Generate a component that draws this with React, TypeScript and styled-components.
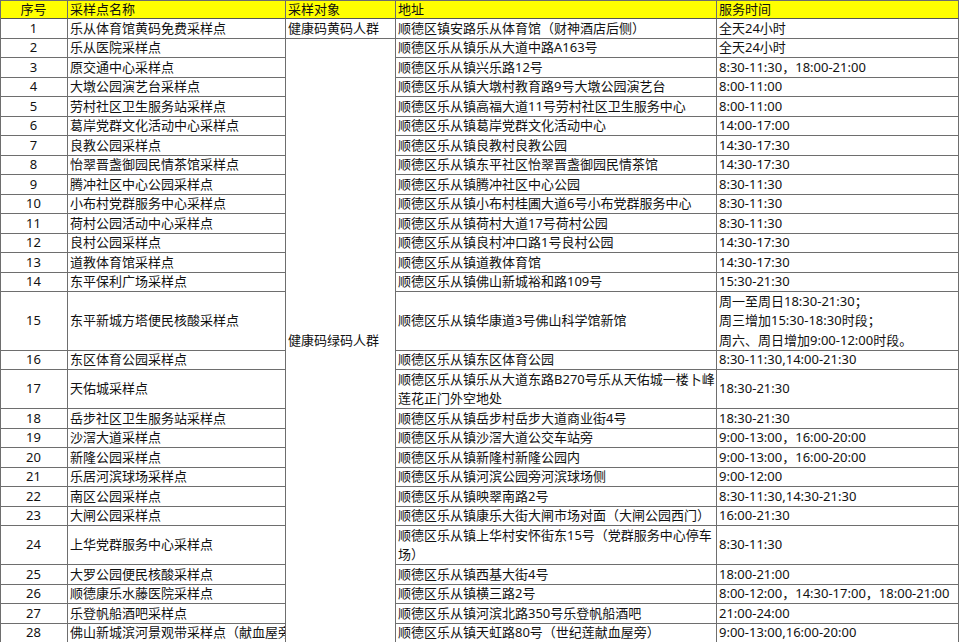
import React from "react";
import styled, { createGlobalStyle } from "styled-components";

const GlobalStyle = createGlobalStyle`
  html, body {
    margin: 0;
    padding: 0;
    background: #ffffff;
  }
  body {
    font-family: "Noto Sans", "Noto Sans CJK SC", sans-serif;
    color: #111111;
    overflow: hidden;
  }
`;

const LINE = 19.5;

type Site = {
  no: number;
  name: string;
  address: string[];
  time: string[];
};

const sites: Site[] = [
  { no: 1, name: "乐从体育馆黄码免费采样点", address: ["顺德区镇安路乐从体育馆（财神酒店后侧）"], time: ["全天24小时"] },
  { no: 2, name: "乐从医院采样点", address: ["顺德区乐从镇乐从大道中路A163号"], time: ["全天24小时"] },
  { no: 3, name: "原交通中心采样点", address: ["顺德区乐从镇兴乐路12号"], time: ["8:30-11:30，18:00-21:00"] },
  { no: 4, name: "大墩公园演艺台采样点", address: ["顺德区乐从镇大墩村教育路9号大墩公园演艺台"], time: ["8:00-11:00"] },
  { no: 5, name: "劳村社区卫生服务站采样点", address: ["顺德区乐从镇高福大道11号劳村社区卫生服务中心"], time: ["8:00-11:00"] },
  { no: 6, name: "葛岸党群文化活动中心采样点", address: ["顺德区乐从镇葛岸党群文化活动中心"], time: ["14:00-17:00"] },
  { no: 7, name: "良教公园采样点", address: ["顺德区乐从镇良教村良教公园"], time: ["14:30-17:30"] },
  { no: 8, name: "怡翠晋盏御园民情茶馆采样点", address: ["顺德区乐从镇东平社区怡翠晋盏御园民情茶馆"], time: ["14:30-17:30"] },
  { no: 9, name: "腾冲社区中心公园采样点", address: ["顺德区乐从镇腾冲社区中心公园"], time: ["8:30-11:30"] },
  { no: 10, name: "小布村党群服务中心采样点", address: ["顺德区乐从镇小布村桂圃大道6号小布党群服务中心"], time: ["8:30-11:30"] },
  { no: 11, name: "荷村公园活动中心采样点", address: ["顺德区乐从镇荷村大道17号荷村公园"], time: ["8:30-11:30"] },
  { no: 12, name: "良村公园采样点", address: ["顺德区乐从镇良村冲口路1号良村公园"], time: ["14:30-17:30"] },
  { no: 13, name: "道教体育馆采样点", address: ["顺德区乐从镇道教体育馆"], time: ["14:30-17:30"] },
  { no: 14, name: "东平保利广场采样点", address: ["顺德区乐从镇佛山新城裕和路109号"], time: ["15:30-21:30"] },
  {
    no: 15,
    name: "东平新城方塔便民核酸采样点",
    address: ["顺德区乐从镇华康道3号佛山科学馆新馆"],
    time: ["周一至周日18:30-21:30；", "周三增加15:30-18:30时段；", "周六、周日增加9:00-12:00时段。"],
  },
  { no: 16, name: "东区体育公园采样点", address: ["顺德区乐从镇东区体育公园"], time: ["8:30-11:30,14:00-21:30"] },
  {
    no: 17,
    name: "天佑城采样点",
    address: ["顺德区乐从镇乐从大道东路B270号乐从天佑城一楼卜峰", "莲花正门外空地处"],
    time: ["18:30-21:30"],
  },
  { no: 18, name: "岳步社区卫生服务站采样点", address: ["顺德区乐从镇岳步村岳步大道商业街4号"], time: ["18:30-21:30"] },
  { no: 19, name: "沙滘大道采样点", address: ["顺德区乐从镇沙滘大道公交车站旁"], time: ["9:00-13:00，16:00-20:00"] },
  { no: 20, name: "新隆公园采样点", address: ["顺德区乐从镇新隆村新隆公园内"], time: ["9:00-13:00，16:00-20:00"] },
  { no: 21, name: "乐居河滨球场采样点", address: ["顺德区乐从镇河滨公园旁河滨球场侧"], time: ["9:00-12:00"] },
  { no: 22, name: "南区公园采样点", address: ["顺德区乐从镇映翠南路2号"], time: ["8:30-11:30,14:30-21:30"] },
  { no: 23, name: "大闸公园采样点", address: ["顺德区乐从镇康乐大街大闸市场对面（大闸公园西门）"], time: ["16:00-21:30"] },
  {
    no: 24,
    name: "上华党群服务中心采样点",
    address: ["顺德区乐从镇上华村安怀街东15号（党群服务中心停车", "场）"],
    time: ["8:30-11:30"],
  },
  { no: 25, name: "大罗公园便民核酸采样点", address: ["顺德区乐从镇西基大街4号"], time: ["18:00-21:00"] },
  { no: 26, name: "顺德康乐水藤医院采样点", address: ["顺德区乐从镇横三路2号"], time: ["8:00-12:00，14:30-17:00，18:00-21:00"] },
  { no: 27, name: "乐登帆船酒吧采样点", address: ["顺德区乐从镇河滨北路350号乐登帆船酒吧"], time: ["21:00-24:00"] },
  { no: 28, name: "佛山新城滨河景观带采样点（献血屋旁）", address: ["顺德区乐从镇天虹路80号（世纪莲献血屋旁）"], time: ["9:00-13:00,16:00-20:00"] },
];

const rowLines = (s: Site) => Math.max(s.address.length, s.time.length, 1);

const Sheet = styled.div<{ $rows: string }>`
  display: grid;
  grid-template-columns: 67px 218px 110px 321px 242px;
  grid-template-rows: ${(p) => p.$rows};
  width: 959px;
  border-top: 1px solid #6e6e6e;
  border-left: 1px solid #6e6e6e;
  box-sizing: border-box;
`;

const Cell = styled.div<{ $center?: boolean }>`
  display: flex;
  flex-direction: column;
  justify-content: center;
  align-items: ${(p) => (p.$center ? "center" : "flex-start")};
  padding: 0 3px 0 2px;
  border-right: 1px solid #6e6e6e;
  border-bottom: 1px solid #6e6e6e;
  box-sizing: border-box;
  overflow: hidden;
  font-size: 13px;
  line-height: ${LINE}px;
  white-space: nowrap;
  min-width: 0;
`;

const HeadCell = styled(Cell)`
  background: #ffff00;
  border-bottom-color: #555555;
`;

const Target = styled(Cell)<{ $span: number }>`
  grid-row: span ${(p) => p.$span};
`;

const Line = styled.span`
  display: block;
`;

const App = () => {
  const rows = ["18px", ...sites.map((s) => `${rowLines(s) * LINE}px`)].join(" ");

  return (
    <>
      <GlobalStyle />
      <Sheet $rows={rows}>
        <HeadCell $center>序号</HeadCell>
        <HeadCell>采样点名称</HeadCell>
        <HeadCell>采样对象</HeadCell>
        <HeadCell>地址</HeadCell>
        <HeadCell>服务时间</HeadCell>

        {sites.map((s) => (
          <React.Fragment key={s.no}>
            <Cell $center>{s.no}</Cell>
            <Cell>{s.name}</Cell>
            {s.no === 1 && <Cell>健康码黄码人群</Cell>}
            {s.no === 2 && <Target $span={sites.length - 1}>健康码绿码人群</Target>}
            <Cell>
              {s.address.map((l) => (
                <Line key={l}>{l}</Line>
              ))}
            </Cell>
            <Cell>
              {s.time.map((l) => (
                <Line key={l}>{l}</Line>
              ))}
            </Cell>
          </React.Fragment>
        ))}
      </Sheet>
    </>
  );
};

export default App;
